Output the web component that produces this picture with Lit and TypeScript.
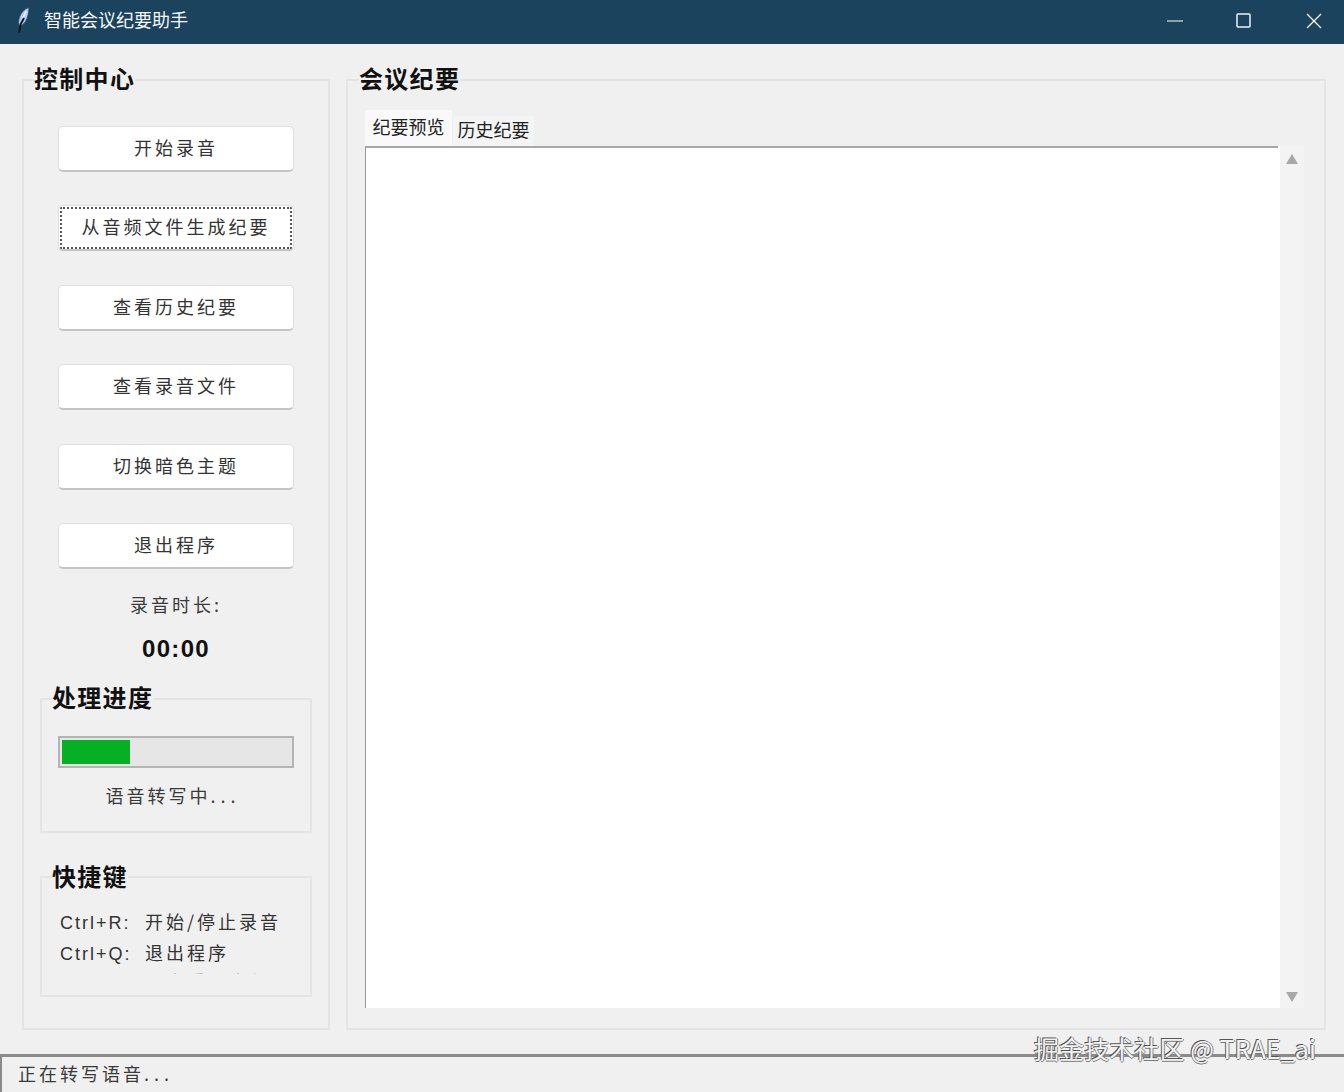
import { LitElement, html, css } from "lit";
import { customElement } from "lit/decorators.js";

const BUTTONS = ["开始录音", "从音频文件生成纪要", "查看历史纪要", "查看录音文件", "切换暗色主题", "退出程序"];

@customElement("app-root")
export class AppRoot extends LitElement {
  static styles = css`
    :host { display: block; position: relative; width: 1344px; height: 1092px; overflow: hidden; background: #f0f0f0;
      font-family: "Noto Sans CJK SC", "Liberation Sans", sans-serif; color: #333; }
    * { box-sizing: border-box; }
    .window { display: flex; flex-direction: column; height: 1092px; }
    .titlebar { flex: none; height: 44px; background: #1c435d; display: flex; align-items: center; color: #fff; }
    .feather { width: 14px; height: 26px; margin-left: 16px; margin-top: -5px; }
    .title { margin-left: 14px; font-size: 18px; line-height: 24px; margin-top: -6px; flex: 1; color: #f4f8fb; }
    .controls { display: flex; align-items: center; margin-top: -3px; }
    .controls svg { display: block; }
    .min { margin-right: 53px; }
    .max { margin-right: 55px; }
    .close { margin-right: 22px; }

    .main { flex: 1; display: flex; gap: 16px; padding: 21px 18px 24px 22px; min-height: 0; }
    fieldset { margin: 0; padding: 0; min-width: 0; border: 2px solid #e4e4e4; border-radius: 1px; }
    legend { padding: 0; font-size: 24px; line-height: 26px; height: 30px; font-weight: 700; letter-spacing: 1.300px; color: #111; }
    .left { flex: none; width: 308px; padding: 31px 34px 0; display: flex; flex-direction: column; align-items: stretch; }
    .left > legend { margin-left: -24px; }
    .right { flex: 1; padding: 15px 20px 20px 17px; display: flex; flex-direction: column; }
    .right > legend { margin-left: -6px; }

    .buttons { display: flex; flex-direction: column; gap: 33.4px; }
    .btn { height: 46px; display: flex; align-items: center; justify-content: center; background: #fff; border: 1px solid #dedede;
      border-bottom: 2px solid #c4c4c4; border-radius: 5px; font-size: 18px; letter-spacing: 3px; color: #333; padding-bottom: 3px; }
    .focus { position: relative; }
    .focus::after { content: ""; position: absolute; inset: 1px 1px 0; border: 2px dotted #555; border-radius: 2px; }
    .timer-label { margin-top: 22px; height: 26px; line-height: 26px; text-align: center; font-size: 18px; letter-spacing: 3px; color: #3a3a3a; }
    .timer { margin-top: 17px; height: 30px; line-height: 30px; text-align: center; font-family: "Liberation Sans", sans-serif; font-size: 24px; font-weight: 700; letter-spacing: 1.300px; color: #111; }
    .dots { letter-spacing: 5px; }

    .sub { margin: 20px -18px 0; }
    .progress-box { height: 149px; padding: 22px 16px 0; margin-top: 20px; }
    .progress-box > legend { margin-left: -6px; }
    .bar { height: 32px; border: 2px solid #b4b4b4; background: #e6e6e6; padding: 2px; }
    .fill { height: 100%; width: 68px; background: #06b025; }
    .bar-label { margin-top: 15px; height: 24px; line-height: 24px; text-align: center; font-size: 18px; letter-spacing: 3px; color: #3a3a3a; padding-right: 6px; }

    .keys-box { height: 135px; padding: 0 0 0 18px; margin-top: 29px; }
    .keys-box > legend { margin-left: -8px; line-height: 28px; }
    .keys { height: 68px; margin-top: 14px; overflow: hidden; }
    .key { height: 31.5px; line-height: 31.5px; white-space: nowrap; font-size: 18px; letter-spacing: 3px; color: #333; }
    .key b { font-weight: 400; display: inline-block; width: 85px; font-family: "Liberation Sans", sans-serif; font-size: 18px; letter-spacing: 2px; }
    .key.cut { color: #a0a0a0; margin-top: -3px; }
    .key.cut b { width: 106px; color: transparent; }

    .tabs { display: flex; align-items: flex-end; height: 36px; }
    .tab { font-size: 18px; display: flex; align-items: center; justify-content: center; letter-spacing: 0; color: #222; }
    .tab.on { width: 87px; height: 36px; background: #f9f9f9; padding-bottom: 4px; }
    .tab.off { width: 81px; height: 30px; margin-left: 1px; background: #f4f4f4; padding-bottom: 5px; }
    .pane { flex: 1; display: flex; min-height: 0; }
    .text { flex: none; width: 915px; background: #fff; border-left: 1px solid #9a9a9a; position: relative; }
    .text::before { content: ""; display: block; height: 2px; width: 912px; background: #a8a8a8; }
    .scroll { flex: none; width: 24px; background: #f3f3f3; display: flex; flex-direction: column; justify-content: space-between; align-items: center; padding: 8px 0 6px; }
    .scroll svg { display: block; }

    .status { flex: none; height: 38px; border-top: 3px solid #8a8a8a; border-left: 2px solid #8a8a8a; padding: 0 0 4px 16px; display: flex; align-items: center;
      font-size: 18px; letter-spacing: 3px; color: #3a3a3a; background: #f0f0f0; }

    .watermark { position: absolute; right: 28px; top: 1031px; white-space: nowrap; font-size: 25px; line-height: 34px; color: #f2f2f2; letter-spacing: 0.1px;
      font-family: "Noto Sans CJK SC", "Liberation Sans", sans-serif; text-shadow: -1px -1px 0 #555, 1px 0 0 #888, 0 1px 0 #777; }
  `;

  render() {
    return html`
      <div class="window">
        <header class="titlebar">
          <svg class="feather" viewBox="0 0 14 26" aria-hidden="true">
            <path d="M12.800 0.500C8 2 3 7 2.500 15.500c.1 1.500 .6 2.800 1.500 3.500 3 -1 5.500 -3.500 7 -7.500C12.300 8 13 4 12.800 .5z" fill="#a9c9ee" stroke="#2a4a68" stroke-width=".8"/>
            <path d="M10.500 4 6 12" fill="none" stroke="#eaf3fc" stroke-width="1.600"/>
            <path d="M8 11 4.500 17.500 3.200 25.500" fill="none" stroke="#0a1016" stroke-width="1.800"/>
          </svg>
          <div class="title">智能会议纪要助手</div>
          <div class="controls">
            <svg class="min" width="16" height="2" viewBox="0 0 16 2"><path d="M0 1h16" stroke="#fff" stroke-width="1"/></svg>
            <svg class="max" width="15" height="15" viewBox="0 0 15 15"><rect x="1" y="1" width="13" height="13" rx="1" fill="none" stroke="#eaf4fb" stroke-width="1.500"/></svg>
            <svg class="close" width="16" height="16" viewBox="0 0 16 16"><path d="M1 1l14 14M15 1L1 15" stroke="#fff" stroke-width="1.200"/></svg>
          </div>
        </header>

        <main class="main">
          <fieldset class="left">
            <legend>控制中心</legend>
            <div class="buttons">
              ${BUTTONS.map((b, i) => html`<div class="btn ${i === 1 ? "focus" : ""}">${b}</div>`)}
            </div>
            <div class="timer-label">录音时长:</div>
            <div class="timer">00:00</div>
            <fieldset class="sub progress-box">
              <legend>处理进度</legend>
              <div class="bar"><div class="fill"></div></div>
              <div class="bar-label">语音转写中<span class="dots">...</span></div>
            </fieldset>
            <fieldset class="sub keys-box">
              <legend>快捷键</legend>
              <div class="keys">
                <div class="key"><b>Ctrl+R:</b>开始/停止录音</div>
                <div class="key"><b>Ctrl+Q:</b>退出程序</div>
                <div class="key cut"><b>Ctrl+H:</b>查看历史纪要</div>
              </div>
            </fieldset>
          </fieldset>

          <fieldset class="right">
            <legend>会议纪要</legend>
            <div class="tabs">
              <div class="tab on">纪要预览</div>
              <div class="tab off">历史纪要</div>
            </div>
            <div class="pane">
              <div class="text"></div>
              <div class="scroll">
                <svg width="12" height="10" viewBox="0 0 12 10"><path d="M6 0l6 10H0z" fill="#a8a8a8"/></svg>
                <svg width="12" height="10" viewBox="0 0 12 10"><path d="M0 0h12L6 10z" fill="#a8a8a8"/></svg>
              </div>
            </div>
          </fieldset>
        </main>

        <footer class="status"><span>正在转写语音<span class="dots">...</span></span></footer>
      </div>
      <div class="watermark">掘金技术社区 @ TRAE_ai</div>
    `;
  }
}
